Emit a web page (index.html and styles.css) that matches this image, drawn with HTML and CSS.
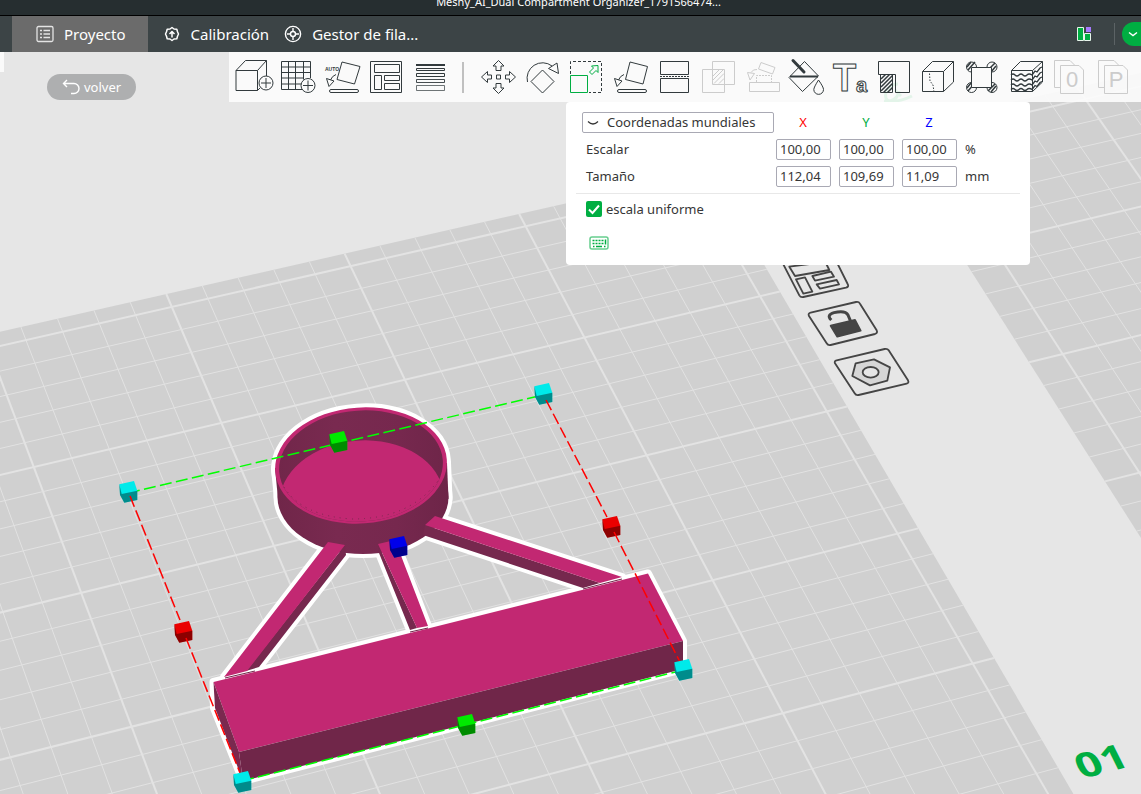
FILE: index.html
```html
<!DOCTYPE html>
<html lang="es">
<head>
<meta charset="utf-8">
<meta name="viewport" content="width=device-width, initial-scale=1">
<title>Meshy_AI_Dual Compartment Organizer</title>
<link rel="stylesheet" href="styles.css">
</head>
<body>
<header class="titlebar"><span class="title">Meshy_AI_Dual Compartment Organizer_1791566474...</span></header>
<nav class="nav">
  <button class="tab tab-active" type="button">
    <svg class="tab-icon" width="18" height="18" viewBox="0 0 18 18" fill="none" stroke="#e4e4e4" stroke-width="1.3"><rect x="1" y="1.5" width="16" height="15" rx="1.5"/><path d="M4 5.5h2M4 9h2M4 12.500h2M7.500 5.500h6.500M7.500 9h6.500M7.500 12.500h6.500"/></svg>
    Proyecto
  </button>
  <button class="tab" type="button">
    <svg class="tab-icon" width="18" height="18" viewBox="0 0 18 18" fill="none" stroke="#fff" stroke-width="1.5" stroke-linejoin="round"><path d="M9 2.500l2 1.500 2.800.2.700 2.600 1 2.200-1 2.200-.7 2.600-2.800.2-2 1.500-2-1.500-2.800-.2-.7-2.600-1-2.200 1-2.200.7-2.600L7 4z"/><path d="M9 12.500V7M6.500 9L9 6.500 11.500 9"/></svg>
    Calibración
  </button>
  <button class="tab" type="button">
    <svg class="tab-icon" width="18" height="18" viewBox="0 0 18 18" fill="none" stroke="#fff" stroke-width="1.4"><circle cx="9" cy="9" r="7.600"/><circle cx="9" cy="9" r="2.500"/><path d="M9 3v3.500M9 11.500V15M3 9h3.500M11.500 9H15"/></svg>
    Gestor de fila...
  </button>
  <div class="nav-right">
    <button class="plain" type="button" aria-label="Paneles">
      <svg width="16" height="16" viewBox="0 0 16 16"><path d="M1.500 1.500h6v13h-6z" fill="#00ae42" stroke="#e8f5ec"/><path d="M8.500 7.500h6v7h-6z" fill="#00ae42" stroke="#e8f5ec"/><rect x="10" y="1" width="5" height="5" fill="#a77bff"/></svg>
    </button>
    <span class="nav-sep"></span>
    <button class="slice" type="button" aria-label="Opciones de laminado">
      <svg width="10" height="6" viewBox="0 0 10 6" fill="none" stroke="#fff" stroke-width="1.400"><path d="M1 1.500l4 3 4-3"/></svg>
    </button>
  </div>
</nav>

<main class="workspace">
  <svg class="scene" viewBox="0 52 1141 742" preserveAspectRatio="xMidYMid slice" role="img" aria-label="Vista 3D de la cama">
    <g id="plates"></g>

    <g fill="none" stroke="#00ae42" stroke-width="3"><path d="M898 84q-8 0-12 8-2 8 4 9 8-2 9-10M884 101q14 2 28-5M895 90l6 6"/></g>

    <g transform="translate(760 260) scale(.3333)" fill="none" stroke="#454545" stroke-width="5.500" stroke-linejoin="round">
      <path d="M58-10L118 106Q122 113 130 111L258 83Q268 80 263 72L222-10"/>
      <path d="M88 20L105 48 208 30 196 6zM108 58L135 52 157 95 130 101zM157 48L213 35 222 50 165 62zM170 73L230 60 237 73 180 86z"/>
      <path d="M152 158L288 126Q296 124 300 131L350 211Q354 219 345 222L212 255Q204 257 200 250L147 168Q143 160 152 158z"/>
      <path d="M212 197L285 180 302 212 232 230z" fill="#454545"/>
      <path d="M214 180Q198 165 222 158 256 150 264 165L272 184" stroke-width="9"/>
      <path d="M230 301L374 267Q382 265 387 272L444 361Q448 369 440 371L296 405Q288 407 284 400L225 310Q222 303 230 301z"/>
      <path d="M287 310L342 298 390 322 382 362 330 376 277 348z" fill="#d6d6d6"/>
      <ellipse cx="332" cy="337" rx="24" ry="16" fill="#e6e6e6"/>
    </g>

    <text class="plate-number" transform="matrix(1.35 -.36 .5 1 1082 779)">01</text>

    <defs>
      <g id="silhouette">
        <path d="M275 468L278 499H448.500L447 463z"/>
        <ellipse cx="361" cy="465.500" rx="86" ry="58" transform="rotate(-4 361 465.500)"/>
        <ellipse cx="363" cy="497" rx="85.500" ry="57"/>
        <path d="M328 542L346 546V555L259 667 224 677z"/>
        <path d="M378 544L395 540 428 626 410 630 379 553z"/>
        <path d="M423 535L425 525 435 516 622 577 583 588z"/>
        <path d="M213.500 682L648 573.500 683 641V669L243 781 214 708z"/>
      </g>
      <clipPath id="inner-rim"><ellipse cx="361" cy="466" rx="82" ry="55.500" transform="rotate(-4 361 466)"/></clipPath>
      <linearGradient id="wall"><stop offset="0" stop-color="#702649"/><stop offset=".35" stop-color="#792a50"/><stop offset=".7" stop-color="#76284e"/><stop offset="1" stop-color="#6d2548"/></linearGradient>
      <g id="cube">
        <path d="M-8.700-7.700L6-11 9.300-1.300V8L-3.700 10.700-8 3z"/>
        <path d="M-8.700-7.700L-6.300 2 9.300-1.300V8L-3.700 10.700-8 3z" fill="#000" fill-opacity=".4"/>
      </g>
    </defs>
    <use href="#silhouette" fill="#fff" stroke="#fff" stroke-width="8" stroke-linejoin="round"/>
    <path d="M275 468L278 499H448.500L447 463z" fill="url(#wall)"/>
    <ellipse cx="363" cy="497" rx="85.500" ry="57" fill="url(#wall)"/>
    <ellipse cx="361" cy="465.500" rx="86" ry="58" transform="rotate(-4 361 465.500)" fill="#c22872"/>
    <g clip-path="url(#inner-rim)">
      <path d="M270 400H455V530H270z" fill="url(#wall)"/>
      <ellipse cx="361.500" cy="500" rx="82" ry="59.500" transform="rotate(-4 361.500 500)" fill="#c22872"/>
    </g>
    <path d="M284 487Q302 516 352 519 412 519 440 478" fill="none" stroke="#7a294f" stroke-width="1" stroke-dasharray="1 5"/>
    <path d="M345 545L346 555 259 667 246 671zM378 544L379 553 410 630 417 628zM425 525L423 535 583 588 600 583z" fill="#76284e"/>
    <path d="M328 542L345 545 247 671 224 677zM378 544L395 540 428 626 417 628zM425 525L435 516 622 577 600 583z" fill="#c22872"/>
    <path d="M213.500 682L648 573.500 683 641 239 752z" fill="#c22872"/>
    <path d="M213.500 682L239 752 243 781 215 708z" fill="#7a294f"/>
    <path d="M239 752L683 641V669L243 781z" fill="#702649"/>
    <path d="M225 678L255 671M410 632L428 628M583 589L622 579" stroke="#702649" stroke-width="1"/>

    <path d="M128 493L543 395M242 781L683 670" fill="none" stroke="#0f0" stroke-width="1.500" stroke-dasharray="12 4.400"/>
    <use href="#cube" x="128" y="492" fill="#00eaea"/>
    <use href="#cube" x="543" y="394" fill="#00eaea"/>
    <use href="#cube" x="611" y="527" fill="#ea0000"/>
    <use href="#cube" x="183" y="632" fill="#ea0000"/>
    <path d="M130 496L180 620M186 638L240 773M546 400L607 517M614 532L680 662" stroke="#f00" stroke-width="1.500" stroke-dasharray="11.500 4"/>
    <use href="#cube" x="338" y="442" fill="#00ea00"/>
    <use href="#cube" x="466" y="725" fill="#00ea00"/>
    <use href="#cube" x="398" y="547" fill="#0000ea"/>
    <use href="#cube" x="683" y="670" fill="#00eaea"/>
    <use href="#cube" x="242" y="782" fill="#00eaea"/>
  </svg>

  <aside class="side">
    <span class="side-handle"></span>
    <button class="back" type="button">
      <svg width="18" height="16" viewBox="0 0 18 16" fill="none" stroke="#fff" stroke-width="1.400"><path d="M5 1L1.500 4.500 5 8M1.500 4.500H12a4.500 4.500 0 0 1 0 10H9"/></svg>
      volver
    </button>
  </aside>

  <section class="toolbar" aria-label="Herramientas">
    <button class="tool" type="button" aria-label="Añadir"><svg viewBox="0 0 44 50"><path d="M4 18.500L13.500 8.500H34.500L25.500 18.500zM4 18.500V38.500H25.500V18.500M34.500 8.500V24M25.500 38.500L28 36"/><circle cx="34" cy="31" r="7"/><path d="M34 26v10M29 31h10"/></svg></button>
    <button class="tool" type="button" aria-label="Añadir cama"><svg viewBox="0 0 44 50"><path d="M26 37.500H5.500V9.500H34.500V26M12.500 9.500v28M19.500 9.500v28M27.500 9.500v18M5.500 15h29M5.500 20.500h29M5.500 26h22M5.500 32h20"/><circle cx="32" cy="33.500" r="7"/><path d="M32 28.500v10M27 33.500h10"/></svg></button>
    <button class="tool" type="button" aria-label="Orientación automática"><svg viewBox="0 0 44 50"><path d="M22 10L40 14.500 34.500 32 17 27.500zM6.500 26.500L14 29 9 34.500zM10.500 28Q12 24 16 22.500"/><rect x="9.500" y="37.500" width="29" height="3" rx="1.500"/><text class="auto-label" x="5" y="19">AUTO</text></svg></button>
    <button class="tool" type="button" aria-label="Ordenar"><svg viewBox="0 0 44 50"><path d="M6.500 9.500h31v31h-31zM10.500 12.500h25v8h-25zM10.500 23.500h7v14h-7zM20.500 23.500h15v5h-15zM20.500 31.500h15v6h-15z"/></svg></button>
    <button class="tool" type="button" aria-label="Altura de capa variable"><svg viewBox="0 0 44 50"><path d="M8 13h29" stroke-width="2"/><path d="M8.500 16.500h28v2h-28zM8.500 21.500h28v3h-28z"/><path d="M8.500 27.500h28v3h-28z" opacity=".9"/><path d="M8.500 33.500h28v5h-28z" opacity=".7"/></svg></button>
    <span class="tool-sep"></span>
    <button class="tool" type="button" aria-label="Mover"><svg viewBox="0 0 44 50"><path d="M22.500 8.500L28 14H25V18.500H20V14H17zM22.500 41.500L28 36H25V31.500H20V36H17zM5.500 25L11.500 19.500V23H15.500V27H11.500V30.500zM39.500 25L33.500 19.500V23H29.500V27H33.500V30.500zM20.500 23h4v4h-4z"/></svg></button>
    <button class="tool" type="button" aria-label="Rotar"><svg viewBox="0 0 44 50"><path d="M22.500 18L34 29.500 22.500 41 11 29.500zM7.500 30A15.500 15.500 0 0 1 32 14M28.500 16.500L37 11 38.500 21.500z"/></svg></button>
    <button class="tool" type="button" aria-label="Escalar" aria-pressed="true"><svg viewBox="0 0 44 50"><path d="M6.500 22V9.500H37.500V40.500H25" stroke-dasharray="3 2"/><path class="accent" d="M6.500 23.500h17v17h-17zM34 13.500L27.500 14 29.500 16 25.500 20 28 22.500 32 18.500 34 20.500z"/></svg></button>
    <button class="tool" type="button" aria-label="Apoyar sobre cara"><svg viewBox="0 0 44 50"><path d="M22 10L39.500 14.500 35 32 17.500 27.500zM6.500 26.500L14 29 9 34.500zM10.500 28Q12 24 16 22.500"/><rect x="9.500" y="37.500" width="29" height="3" rx="1.500"/></svg></button>
    <button class="tool" type="button" aria-label="Cortar"><svg viewBox="0 0 44 50"><path d="M8.500 9.500h28v13h-28zM8.500 26.500h28v14h-28z"/><path d="M8 24.500h30" stroke-dasharray="2 1"/></svg></button>
    <button class="tool" type="button" aria-label="Operación booleana" disabled><svg viewBox="0 0 44 50"><path d="M16.500 9.500h22v23h-22zM6.500 17.500h22v23h-22zM17 24l6-6M17 28l10-10M18 31.500L28 21.500M23 31.500l5-5"/></svg></button>
    <button class="tool" type="button" aria-label="Ensamblar" disabled><svg viewBox="0 0 44 50"><path d="M9.500 30.500h30v9h-30zM21 10.500L35 15.500 32.500 22 18.500 17zM7.500 20.500L14.500 21.500 10 28zM11 20.500Q13 17 17 17.500"/><path d="M16.500 30V23.500H31.500V30" stroke-dasharray="2 1"/></svg></button>
    <button class="tool" type="button" aria-label="Pintar color"><svg viewBox="0 0 44 50"><path d="M20.500 9.500L34.500 24 18.500 39.500 5 25.500zM34.500 28Q39.500 35 39.500 37.500A4.800 4.800 0 0 1 29.800 37.500Q30 35 34.500 28z"/><path d="M6 24.500H34" stroke-width="2"/><path d="M9 8.500L20 20" stroke-width="3" stroke-linecap="round"/></svg></button>
    <button class="tool" type="button" aria-label="Texto"><svg viewBox="0 0 44 50"><text class="glyph-t" x="5" y="39">T</text><text class="glyph-a" x="28" y="40">a</text></svg></button>
    <button class="tool" type="button" aria-label="Pintar soportes"><svg viewBox="0 0 44 50"><path d="M6.500 9.500H37.500V40.500H23.500V22.500H6.500zM8.500 22.500h12v18h-12z"/><path d="M9 27l4.500-4.500M9 31l8.500-8.500M9 35L20.500 23.500M9 39L20.500 27.500M11.500 40.500l9-9M15.500 40.500l5-5" stroke-width="1.500"/></svg></button>
    <button class="tool" type="button" aria-label="Pintar costura"><svg viewBox="0 0 44 50"><path d="M6.500 19.500L16.500 9.500H37.500L27.500 19.500zM6.500 19.500V39.500H27.500V19.500M37.500 9.500V30L27.500 39.500"/><path d="M13.500 21.500L14 29 17 33 18 40" stroke-dasharray="1.500 1.500"/></svg></button>
    <button class="tool" type="button" aria-label="Orejas de borde"><svg viewBox="0 0 44 50"><circle cx="11.500" cy="15" r="5"/><circle cx="32" cy="15" r="5"/><circle cx="11.500" cy="35.500" r="5"/><circle cx="32" cy="35.500" r="5"/><path d="M7 15l4-5M8 18l7-8M28 18l7-7M31 20l5-6M7 36l4-5M8 39l6-7M28 39l7-7M31 40l5-6" stroke-width="1.500"/><path d="M11.500 15.500h20v20h-20z" fill="#fafafa"/></svg></button>
    <button class="tool" type="button" aria-label="Piel rugosa"><svg viewBox="0 0 44 50"><path d="M7.500 18.500L16.500 9.500H38.500L28.500 18.500zM7.500 18.500V39.500H28.500V18.500M38.500 9.500V30L28.500 39.500"/><path d="M7 23q2-2 4 0t4 0 4 0 4 0 5 0l3-4 2 1 3-4 2-1M7 28q2-2 4 0t4 0 4 0 4 0 5 0l3-4 2 1 3-4 2-1M7 33q2-2 4 0t4 0 4 0 4 0 5 0l3-4 2 1 3-4 2-1M7 37.500q2-2 4 0t4 0 4 0 4 0 5 0l3-4 2 1 3-4 2-1" stroke-width="1.300"/></svg></button>
    <button class="tool" type="button" aria-label="Objeto" disabled><svg viewBox="0 0 44 50"><path d="M12 35.500H6.500V8.500H22L27 13.500M12.500 13.500H31L35.500 18V41.500H12.500z"/><text class="glyph-page" x="24" y="35">0</text></svg></button>
    <button class="tool" type="button" aria-label="Pieza" disabled><svg viewBox="0 0 44 50"><path d="M12 35.500H6.500V8.500H22L27 13.500M12.500 13.500H31L35.500 18V41.500H12.500z"/><text class="glyph-page" x="24" y="35">P</text></svg></button>

    <form class="popover">
      <div class="fields">
        <div class="select-wrap">
          <select class="coord" aria-label="Sistema de coordenadas"><option>Coordenadas mundiales</option></select>
          <svg class="chevron" width="12" height="6" viewBox="0 0 12 6" fill="none" stroke="#363636" stroke-width="1.200"><path d="M1 1.500Q6 6.500 11 1.500"/></svg>
        </div>
        <span class="axis axis-x">X</span><span class="axis axis-y">Y</span><span class="axis axis-z">Z</span><span></span>
        <label class="row-label" for="scale-x">Escalar</label>
        <input class="num" id="scale-x" value="100,00"><input class="num" aria-label="Escalar Y" value="100,00"><input class="num" aria-label="Escalar Z" value="100,00"><span class="unit">%</span>
        <label class="row-label" for="size-x">Tamaño</label>
        <input class="num" id="size-x" value="112,04"><input class="num" aria-label="Tamaño Y" value="109,69"><input class="num" aria-label="Tamaño Z" value="11,09"><span class="unit">mm</span>
      </div>
      <hr class="rule">
      <label class="uniform">
        <span class="check-wrap"><input class="check" type="checkbox" checked><svg class="tick" width="16" height="16" viewBox="0 0 16 16" fill="none" stroke="#fff" stroke-width="2"><path d="M3 8.500l3.500 3.500L13 4.500"/></svg></span>
        escala uniforme
      </label>
      <button class="keys" type="button" aria-label="Atajos de teclado">
        <svg width="20" height="14" viewBox="0 0 20 14" fill="none" stroke="#00ae42"><rect x="1" y="1" width="18" height="12" rx="2" opacity=".6" stroke-width="1.500"/><path d="M3.500 4.500h11M3.500 7.500h11" stroke-width="1.500" stroke-dasharray="2 1"/><path d="M4 10.500h1.500M7 10.500h6M15 10.500h1.500M16.500 3.500v5" stroke-width="1.500"/></svg>
      </button>
    </form>
  </section>
</main>
<script src="scene.js"></script>
</body>
</html>
```
FILE: styles.css
```css
* { box-sizing: border-box; }

body {
  margin: 0;
  height: 100vh;
  overflow: hidden;
  display: flex;
  flex-direction: column;
  background: #e6e6e6;
  color: #363636;
  font: 13px/20px "Noto Sans", "Open Sans", sans-serif;
}

button {
  border: 0;
  padding: 0;
  background: none;
  font: inherit;
  color: inherit;
}

.titlebar {
  height: 16px;
  flex: none;
  display: flex;
  align-items: flex-end;
  justify-content: center;
  padding: 0 0 5px 16px;
  background: #262e30;
  border-bottom: 1px solid #000;
  overflow: hidden;
  color: #fff;
}

.title { font-size: 11px; line-height: 16px; }

.nav {
  height: 36px;
  flex: none;
  display: flex;
  align-items: stretch;
  padding-left: 12px;
  background: #3c4446;
  color: #fff;
}

.tab {
  display: flex;
  align-items: center;
  gap: 10px;
  margin-right: 15px;
  padding-bottom: 1px;
  font-size: 15px;
}

.tab-active {
  padding: 0 22px 1px 24px;
  background: #6b6b6b;
}

.nav-right {
  margin-left: auto;
  display: flex;
  align-items: center;
}

.plain { display: flex; }

.nav-sep {
  width: 1px;
  height: 22px;
  margin: 0 7px 0 22px;
  background: #5c6365;
}

.slice {
  width: 30px;
  height: 24px;
  margin-right: -11px;
  padding-left: 6px;
  border-radius: 12px;
  background: #00ae42;
  display: flex;
  align-items: center;
}

.workspace {
  position: relative;
  flex: 1;
  min-height: 0;
  display: flex;
  align-items: flex-start;
}

.scene {
  position: absolute;
  inset: 0;
  width: 100%;
  height: 100%;
}

.plate { fill: #d0d0d0; }
.grid-line { stroke: #e2e2e2; stroke-width: 1; }
.grid-bold { stroke: #e3e3e3; stroke-width: 2; }

.plate-number {
  font: 700 32px "Open Sans", "Noto Sans", sans-serif;
  fill: #00ae42;
}

.side {
  position: relative;
  width: 229px;
  flex: none;
  display: flex;
  align-items: flex-start;
}

.side-handle {
  width: 4px;
  height: 20px;
  background: #fafafa;
}

.back {
  display: flex;
  align-items: center;
  gap: 4px;
  height: 26px;
  margin: 22px 0 0 43px;
  padding: 0 15px 1px;
  border-radius: 13px;
  background: #aeafb0;
  color: #fff;
}

.toolbar {
  position: relative;
  flex: 1;
  min-width: 0;
  height: 50px;
  display: flex;
  padding-left: 3px;
  background: rgba(252, 252, 252, .9);
}

.tool {
  width: 44px;
  height: 50px;
  flex: none;
}

.tool svg {
  display: block;
  fill: none;
  stroke: #323a3d;
  stroke-width: 1;
}

.tool:disabled svg { stroke: #ccc; }
.tool .accent { stroke: #00ae42; stroke-width: 1; }

.auto-label {
  font: 700 5px "Liberation Sans", sans-serif;
  fill: #323a3d;
  stroke: none;
}

.glyph-t { font: 700 38px "Liberation Sans", sans-serif; }
.glyph-a { font: 700 20px "Liberation Sans", sans-serif; }

.glyph-page {
  font: 22px "Liberation Sans", sans-serif;
  text-anchor: middle;
  fill: #ccc;
  stroke: none;
}

.tool-sep {
  width: 2px;
  height: 31px;
  flex: none;
  margin: 10px 12px 0 10px;
  background: #c0c0c0;
}

.popover {
  position: absolute;
  top: 50px;
  left: 337px;
  width: 464px;
  margin: 0;
  padding: 10px 10px 15px;
  border-radius: 4px;
  background: #fff;
}

.fields {
  display: grid;
  grid-template-columns: 194px 63px 63px 63px auto;
  grid-auto-rows: 21px;
  row-gap: 6px;
  padding-left: 6px;
  align-items: start;
}

.select-wrap {
  position: relative;
  width: 192px;
}

.coord {
  display: block;
  width: 100%;
  height: 21px;
  padding: 0 0 0 24px;
  border: 1px solid #a9a9b4;
  border-radius: 2px;
  background: #fff;
  appearance: none;
  font: inherit;
  line-height: 19px;
  color: inherit;
}

.chevron {
  position: absolute;
  left: 5px;
  top: 8px;
  pointer-events: none;
}

.axis {
  width: 54px;
  text-align: center;
}

.axis-x { color: #f00; }
.axis-y { color: #00ae42; }
.axis-z { color: #00f; }

.row-label { padding-left: 4px; }

.num {
  width: 55px;
  height: 21px;
  padding: 0 3px 1px;
  border: 1px solid #a9a9b4;
  border-radius: 2px;
  font: inherit;
  line-height: 18px;
  color: inherit;
}

.rule {
  height: 1px;
  margin: 6px 0 5px;
  border: 0;
  background: #e8e8e8;
}

.uniform {
  display: flex;
  align-items: center;
  gap: 4px;
  padding-left: 10px;
}

.check-wrap {
  position: relative;
  display: flex;
}

.check {
  width: 16px;
  height: 16px;
  margin: 0;
  border-radius: 2px;
  background: #00ae42;
  appearance: none;
}

.tick {
  position: absolute;
  inset: 0;
  pointer-events: none;
}

.keys {
  display: flex;
  margin: 17px 0 0 13px;
}
```
FILE: scene.js
```js
// Perspective of the build plates: maps grid cells (u, v) to scene coordinates.
function project(u, v) {
  const s = u / 15;
  const t = (v - 5) / 10;
  const w = 1 + 0.03358 * s - 0.05974 * t;
  return [
    ((33.8 + 570.2 * s + 90 * t) / w).toFixed(1),
    ((467 - 118.2 * s + 216.3 * t) / w).toFixed(1)
  ];
}

const layer = document.getElementById("plates");

function add(tag, className, attrs) {
  const el = document.createElementNS("http://www.w3.org/2000/svg", tag);
  el.setAttribute("class", className);
  for (const name in attrs) el.setAttribute(name, attrs[name]);
  layer.appendChild(el);
}

function line(u1, v1, u2, v2, bold) {
  const [x1, y1] = project(u1, v1);
  const [x2, y2] = project(u2, v2);
  add("line", bold ? "grid-bold" : "grid-line", { x1, y1, x2, y2 });
}

function plate(left, right, firstColumn) {
  const top = -0.57;
  const bottom = 30;
  const corners = [[left, top], [right, top], [right, bottom], [left, bottom]];
  add("polygon", "plate", { points: corners.map(c => project(c[0], c[1]).join()).join(" ") });
  for (let i = 0; firstColumn + i < right; i++) {
    line(firstColumn + i, top, firstColumn + i, bottom, i % 5 === 0);
  }
  for (let v = 0; v < bottom; v++) line(left, v, right, v, v % 5 === 0);
}

plate(-15, 20.57, -15);
plate(25.75, 45, 26.72);
```
